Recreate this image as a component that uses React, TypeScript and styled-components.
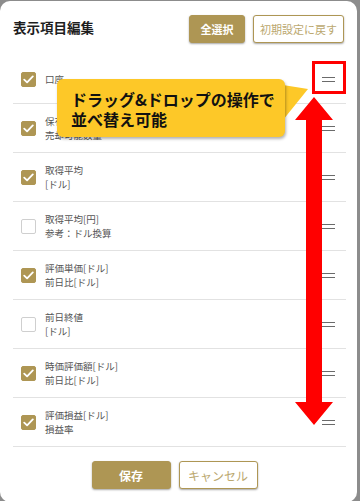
import React from "react";
import styled, { createGlobalStyle } from "styled-components";

const Global = createGlobalStyle`
  html, body { margin: 0; padding: 0; }
  body {
    background: #8c8c8c;
    font-family: "Noto Sans CJK JP", "Noto Sans", sans-serif;
    width: 360px;
    height: 501px;
    overflow: hidden;
  }
`;

const GOLD = "#ae9654";

const Card = styled.div`
  position: relative;
  margin-top: 1px;
  width: 357px;
  height: 501px;
  background: #fff;
  border-radius: 10px;
  box-sizing: border-box;
  display: flex;
  flex-direction: column;
`;

const Header = styled.div`
  height: 54px;
  display: flex;
  align-items: flex-start;
  padding: 14px 13px 0 13px;
  box-sizing: border-box;
`;

const Title = styled.h1`
  margin: 0;
  flex: 1;
  font-size: 13.5px;
  font-weight: 700;
  color: #1e1e1e;
  line-height: 24px;
  letter-spacing: 0;
`;

const Btn = styled.button<{ $filled?: boolean; $w: number; $bold?: boolean; $fs?: number }>`
  width: ${(p) => p.$w}px;
  height: 28px;
  box-sizing: border-box;
  border-radius: 3px;
  border: 1.5px solid ${GOLD};
  background: ${(p) => (p.$filled ? GOLD : "#fff")};
  color: ${(p) => (p.$filled ? "#fff" : "#bba86f")};
  font-family: inherit;
  font-size: ${(p) => p.$fs ?? 11}px;
  font-weight: ${(p) => (p.$bold ? 700 : 400)};
  padding: 0;
  box-shadow: 0 1px 2px rgba(0, 0, 0, 0.35);
  margin-left: 8px;
  &:first-child { margin-left: 0; }
`;

const List = styled.div`
  margin: 0 11px 0 13px;
  display: flex;
  flex-direction: column;
`;

const Row = styled.div`
  height: 49px;
  box-sizing: border-box;
  border-bottom: 1px solid #e2e2e2;
  display: flex;
  align-items: center;
  padding-left: 8px;
  padding-right: 11px;
`;

const Check = styled.span<{ $on: boolean }>`
  width: 15px;
  height: 15px;
  box-sizing: border-box;
  border-radius: 2px;
  flex: none;
  background: ${(p) => (p.$on ? GOLD : "#fff")};
  border: 1px solid ${(p) => (p.$on ? GOLD : "#cfcfcf")};
  display: flex;
  align-items: center;
  justify-content: center;
`;

const Label = styled.div`
  flex: 1;
  margin-left: 9px;
  display: flex;
  flex-direction: column;
  font-size: 9.5px;
  line-height: 14px;
  color: #555;
`;

const Handle = styled.span`
  width: 13px;
  height: 5px;
  box-sizing: border-box;
  border-top: 1.5px solid #6a6a6a;
  border-bottom: 1.5px solid #6a6a6a;
  flex: none;
  margin-top: 1px;
`;

const Footer = styled.div`
  display: flex;
  justify-content: center;
  padding-top: 14px;
  padding-right: 8px;
`;

const Overlay = styled.svg`
  position: absolute;
  left: 0;
  top: 0;
  pointer-events: none;
`;

const Callout = styled.div`
  position: absolute;
  left: 57px;
  top: 78px;
  width: 228px;
  height: 58px;
  background: #fdc828;
  border-radius: 6px;
  box-shadow: 1px 2px 3px rgba(0, 0, 0, 0.3);
  box-sizing: border-box;
  padding: 11px 0 0 14px;
  font-size: 16px;
  font-weight: 700;
  line-height: 19.5px;
  color: #111;
  white-space: nowrap;
`;

const rows: { on: boolean; lines: string[] }[] = [
  { on: true, lines: ["口座"] },
  { on: true, lines: ["保有数量", "売却可能数量"] },
  { on: true, lines: ["取得平均", "[ドル]"] },
  { on: false, lines: ["取得平均[円]", "参考：ドル換算"] },
  { on: true, lines: ["評価単価[ドル]", "前日比[ドル]"] },
  { on: false, lines: ["前日終値", "[ドル]"] },
  { on: true, lines: ["時価評価額[ドル]", "前日比[ドル]"] },
  { on: true, lines: ["評価損益[ドル]", "損益率"] },
];

const Tick = () => (
  <svg width="11" height="9" viewBox="0 0 11 9">
    <path d="M1.2 4.6 L4.1 7.4 L9.8 1.4" fill="none" stroke="#fff" strokeWidth="1.8" strokeLinecap="round" strokeLinejoin="round" />
  </svg>
);

export default function App() {
  return (
    <>
      <Global />
      <Card>
        <Header>
          <Title>表示項目編集</Title>
          <Btn $filled $w={56} $bold style={{ marginLeft: 8 }}>全選択</Btn>
          <Btn $w={91}>初期設定に戻す</Btn>
        </Header>
        <List>
          {rows.map((r, i) => (
            <Row key={i}>
              <Check $on={r.on}>{r.on && <Tick />}</Check>
              <Label>
                {r.lines.map((l, j) => (
                  <span key={j}>{l}</span>
                ))}
              </Label>
              <Handle />
            </Row>
          ))}
        </List>
        <Footer>
          <Btn $filled $w={79} $bold $fs={12}>保存</Btn>
          <Btn $w={79} $fs={12}>キャンセル</Btn>
        </Footer>

        <Overlay width="357" height="501" viewBox="0 0 357 501">
          <rect x="313.5" y="61.5" width="31" height="30" fill="none" stroke="#ff0000" strokeWidth="3" />
          <polygon
            points="314,96 333,119 322,119 322,401 333,401 314,424 295,401 306,401 306,119 295,119"
            fill="#ff0000"
          />
          <polygon points="283,84 308,88 283,119" fill="#fdc828" />
        </Overlay>
        <Callout>
          ドラッグ&amp;ドロップの操作で
          <br />
          並べ替え可能
        </Callout>
      </Card>
    </>
  );
}
